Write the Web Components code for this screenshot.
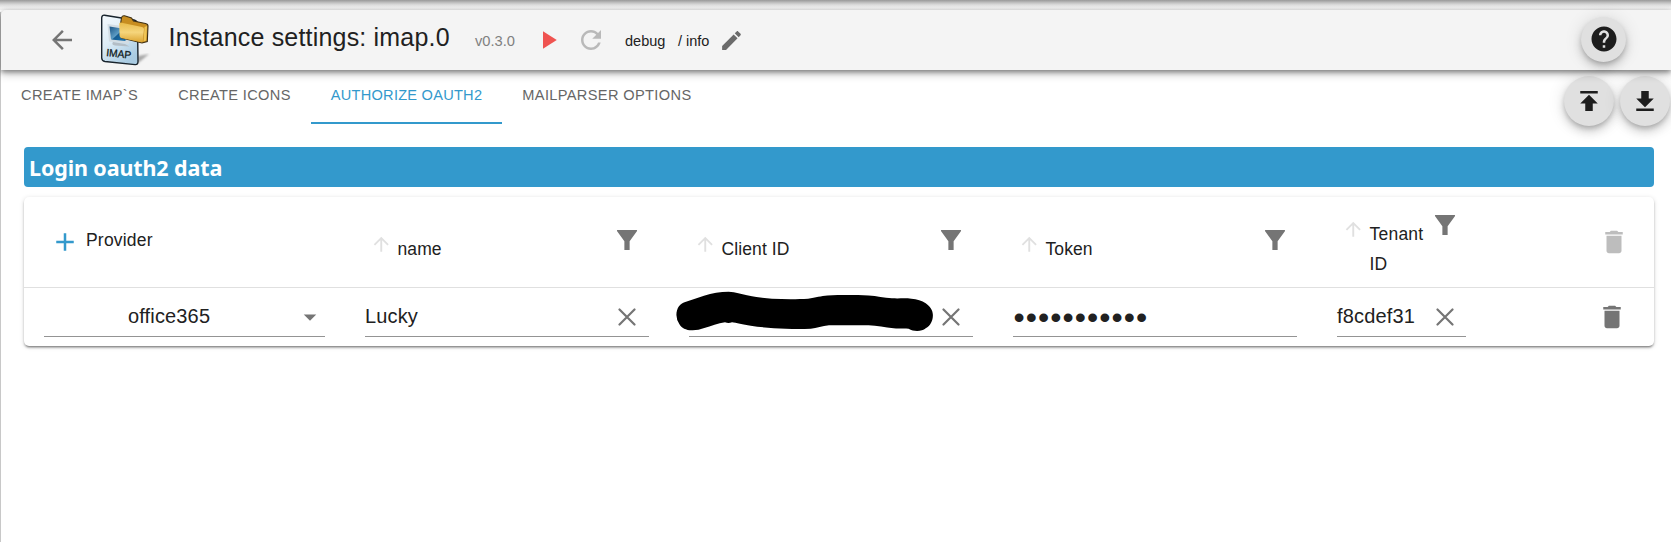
<!DOCTYPE html>
<html lang="en">
<head>
<meta charset="utf-8">
<title>Instance settings</title>
<style>
html,body{margin:0;height:100%;overflow:hidden;background:#fff}
body{font-family:"Liberation Sans",Arial,sans-serif;color:#212121}
</style>
</head>
<body>
<settings-page>
  <app-header slot="header" heading="Instance settings: imap.0" version="v0.3.0"></app-header>
  <tab-bar slot="tabs">
    <tab-item>CREATE IMAP`S</tab-item>
    <tab-item>CREATE ICONS</tab-item>
    <tab-item selected>AUTHORIZE OAUTH2</tab-item>
    <tab-item>MAILPARSER OPTIONS</tab-item>
  </tab-bar>
  <section-title>Login oauth2 data</section-title>
  <data-card>
    <head-cell kind="add">Provider</head-cell>
    <head-cell>name</head-cell>
    <head-cell>Client ID</head-cell>
    <head-cell>Token</head-cell>
    <head-cell kind="tall">Tenant<br>ID</head-cell>
    <trash-cell muted></trash-cell>
    <field-cell kind="select">office365</field-cell>
    <field-cell clear>Lucky</field-cell>
    <field-cell clear><redaction-mark></redaction-mark></field-cell>
    <field-cell kind="secret">•••••••••••</field-cell>
    <field-cell clear kind="narrow">f8cdef31</field-cell>
    <trash-cell></trash-cell>
  </data-card>
</settings-page>
<script>
const define = (name, html) => customElements.define(name, class extends HTMLElement {
  connectedCallback() {
    if (this.shadowRoot) return;
    const t = document.createElement('template');
    t.innerHTML = typeof html === 'function' ? html(this) : html;
    this.attachShadow({mode: 'open'}).append(t.content.cloneNode(true));
  }
});

const ICONS = {
  back: 'M20 11H7.83l5.59-5.59L12 4l-8 8 8 8 1.41-1.41L7.83 13H20v-2z',
  up: 'M4 12l1.41 1.41L11 7.83V20h2V7.83l5.58 5.59L20 12l-8-8-8 8z',
  play: 'M8 5v14l11-7z',
  refresh: 'M17.65 6.35C16.2 4.9 14.21 4 12 4c-4.42 0-7.99 3.58-7.99 8s3.57 8 7.99 8c3.73 0 6.84-2.55 7.73-6h-2.08c-.82 2.33-3.04 4-5.65 4-3.31 0-6-2.69-6-6s2.69-6 6-6c1.66 0 3.14.69 4.22 1.78L13 11h7V4l-2.35 2.35z',
  edit: 'M3 17.25V21h3.75L17.81 9.94l-3.75-3.75L3 17.25zM20.71 7.04c.39-.39.39-1.02 0-1.41l-2.34-2.34c-.39-.39-1.02-.39-1.41 0l-1.83 1.83 3.75 3.75 1.83-1.83z',
  help: 'M12 2C6.48 2 2 6.48 2 12s4.48 10 10 10 10-4.48 10-10S17.52 2 12 2zm1 17h-2v-2h2v2zm2.07-7.75l-.9.92C13.45 12.9 13 13.5 13 15h-2v-.5c0-1.1.45-2.1 1.17-2.83l1.24-1.26c.37-.36.59-.86.59-1.41 0-1.1-.9-2-2-2s-2 .9-2 2H8c0-2.21 1.79-4 4-4s4 1.79 4 4c0 .88-.36 1.68-.93 2.25z',
  publish: 'M5 4v2h14V4H5zm0 10h4v6h6v-6h4l-7-7-7 7z',
  download: 'M19 20v-2H5v2h14zm0-10h-4V4H9v6H5l7 7 7-7z',
  add: 'M19 13h-6v6h-2v-6H5v-2h6V5h2v6h6v2z',
  drop: 'M7 10l5 5 5-5z',
  trash: 'M6 19c0 1.1.9 2 2 2h8c1.1 0 2-.9 2-2V7H6v12zM19 4h-3.5l-1-1h-5l-1 1H5v2h14V4z',
  filter: 'M4.4 4h15.2c.5 0 .6.5.3.9L14.1 13v7H9.9v-7L4.1 4.9C3.8 4.5 3.9 4 4.4 4z'
};
define('md-icon', el => `
  <style>:host{display:block;flex:none;width:30px;height:30px}svg{display:block;width:100%;height:100%;fill:currentColor}</style>
  <svg viewBox="0 0 24 24"><path d="${ICONS[el.getAttribute('name')]}"/></svg>`);

define('round-button', el => `
  <style>:host{display:flex;flex:none;align-items:center;justify-content:center;width:50px;height:50px;border-radius:50%;background:#e0e0e0;color:#1d1d1d;box-shadow:0 3px 5px -1px rgba(0,0,0,.2),0 6px 10px rgba(0,0,0,.14),0 1px 18px rgba(0,0,0,.12)}
  :host([small]){width:45px;height:45px}</style>
  <md-icon name="${el.getAttribute('icon')}"></md-icon>`);

define('imap-logo', `
  <style>:host{display:block;flex:none;width:52px;height:54px}svg{display:block}text{font:10.5px "Liberation Sans",Arial,sans-serif}</style>
  <svg width="52" height="54" viewBox="0 0 52 54">
    <defs>
      <linearGradient id="p" x1="0" y1="0" x2=".6" y2="1"><stop offset="0" stop-color="#f6fafd"/><stop offset=".5" stop-color="#dcecf6"/><stop offset="1" stop-color="#a9cbe2"/></linearGradient>
      <linearGradient id="f" x1="0" y1="0" x2="0" y2="1"><stop offset="0" stop-color="#e8bb4a"/><stop offset=".5" stop-color="#f5d57c"/><stop offset="1" stop-color="#dca531"/></linearGradient>
      <linearGradient id="s" x1="0" y1="0" x2="1" y2="1"><stop offset="0" stop-color="#1c5586"/><stop offset=".5" stop-color="#5c9cc4"/><stop offset=".55" stop-color="#155c92"/><stop offset="1" stop-color="#1b75b0"/></linearGradient>
      <filter id="b"><feGaussianBlur stdDeviation="1.2"/></filter>
    </defs>
    <path d="M38 51L50 41L39 43z" fill="#777" opacity=".6" filter="url(#b)"/>
    <path d="M5.500 2.200L35 7Q38.500 8 38.500 11L39 48.500Q39 52 36 51.600L6 48.500Q2.800 48 2.700 45L2.700 5Q2.900 1.900 5.500 2.200z" fill="url(#p)" stroke="#18232c" stroke-width="1.400"/>
    <path d="M8.500 11L30 14V31L10 28.500z" fill="#d3dde4"/>
    <path d="M14 29L26 31L30.500 33.500L16 32.500Q12 31.500 14 29z" fill="#b4bec6"/>
    <path d="M10.500 13.500L26.500 16V28L12 26.500z" fill="url(#s)"/>
    <path d="M22.500 5Q23 2.300 25.500 2.800L32.500 5L34.500 8L46.500 10.500Q49 11 49 13L48.300 28.500L43 30L23 25L21.500 11z" fill="#c78d20" stroke="#3d2f14" stroke-width="1.100"/>
    <path d="M21.500 9.500L43 14Q45 14.500 45 16L43.800 28.500Q43 29.500 41 29L22 25Q20.500 24 20.500 22L20.300 11Q20.300 9.300 21.500 9.500z" fill="url(#f)"/>
    <path d="M45.500 14L48 13L47.200 27.500L44.500 28.500z" fill="#efc555"/>
    <text x="7" y="43" transform="rotate(6 7 43)" textLength="25" lengthAdjust="spacingAndGlyphs" fill="#101a20" stroke="#101a20" stroke-width=".3">IMAP</text>
  </svg>`);

define('app-header', el => `
  <style>
  :host{display:flex;align-items:center;height:60px;background:#f4f4f4;border-radius:5px 0 0 0;position:relative;box-shadow:0 2px 5px 0 rgba(0,0,0,.4),0 4px 10px rgba(0,0,0,.22)}
  .back{margin-left:46px;color:#757575}
  imap-logo{margin:0 17.500px 0 22px}
  h1{margin:0;width:306.500px;padding-bottom:7px;font:400 25px/30px "Liberation Sans",Arial,sans-serif;letter-spacing:.19px;white-space:nowrap}
  span{font-size:14.5px;line-height:20px;padding-top:2px;white-space:nowrap}
  .ver{width:58px;color:#808080;font-size:14.700px}
  .play{color:#ef5350}.refresh{margin-left:13px;color:#b9b9b9}
  .debug{margin-left:19px;width:53px}.info{width:41px}
  .edit{width:25px;height:25px;color:#6b6b6b}
  round-button{margin:-2px 45px 0 auto}
  </style>
  <md-icon class="back" name="back"></md-icon><imap-logo></imap-logo>
  <h1>${el.getAttribute('heading')}</h1><span class="ver">${el.getAttribute('version')}</span>
  <md-icon class="play" name="play"></md-icon><md-icon class="refresh" name="refresh"></md-icon>
  <span class="debug">debug</span><span class="info">/ info</span><md-icon class="edit" name="edit"></md-icon>
  <round-button small icon="help"></round-button>`);

define('tab-bar', `
  <style>:host{display:flex;height:54px}.tools{display:flex;gap:6px;margin:6px 1px 0 auto}</style>
  <slot></slot><div class="tools"><round-button icon="publish"></round-button><round-button icon="download"></round-button></div>`);

define('tab-item', `
  <style>:host{display:block;box-sizing:border-box;height:54px;padding:15px 20px 0;font-size:14.600px;line-height:20px;letter-spacing:.36px;color:#666;white-space:nowrap}
  :host([selected]){color:#3399cc;border-bottom:2px solid #3399cc;letter-spacing:.24px}</style><slot></slot>`);

define('section-title', `
  <style>:host{display:block;box-sizing:border-box;height:40px;margin:23px 17px 0 23px;padding-left:5px;border-radius:4px;background:#3399cc;color:#fff;font:bold 21.500px/41px "Noto Sans","Open Sans",sans-serif;letter-spacing:-.12px;white-space:nowrap}</style><slot></slot>`);

define('data-card', `
  <style>:host{display:grid;grid-template-columns:321px 324px 324px 324px 169px 168px;grid-template-rows:91px 58px;height:149px;margin:10px 17px 0 23px;border-radius:5px;background:#fff;box-shadow:0 3px 1px -2px rgba(0,0,0,.2),0 2px 2px rgba(0,0,0,.24),0 1px 5px rgba(0,0,0,.14)}</style><slot></slot>`);

define('head-cell', el => {
  const add = el.getAttribute('kind') === 'add';
  return `<style>
  :host{display:flex;align-items:flex-start;box-sizing:border-box;border-bottom:1px solid #e0e0e0;height:91px;padding:37px 27px 0 25px;font-size:17.500px;line-height:30px;letter-spacing:.1px}
  :host([kind=add]){padding:30px 0 0 26px;letter-spacing:.2px}
  :host([kind=tall]){padding:22px 26px 0 25px;letter-spacing:.22px}
  .sort{width:22.500px;height:22.500px;color:#e0e0e0;margin-top:-1px}
  .label{margin-left:5px;white-space:nowrap}
  .filter{margin:-9px 0 0 auto;color:#757575}
  .add{color:#3399cc}
  :host([kind=add]) .label{margin:-2px 0 0 6px}
  </style>` + (add
    ? '<md-icon class="add" name="add"></md-icon><div class="label"><slot></slot></div>'
    : '<md-icon class="sort" name="up"></md-icon><div class="label"><slot></slot></div><md-icon class="filter" name="filter"></md-icon>');
});

define('trash-cell', `
  <style>:host{display:flex;box-sizing:border-box;height:58px;padding:14px 0 0 111px;color:#757575}
  :host([muted]){height:91px;padding:30px 0 0 113px;color:#bdbdbd;border-bottom:1px solid #e0e0e0}</style>
  <md-icon name="trash"></md-icon>`);

define('field-cell', el => {
  const kind = el.getAttribute('kind');
  return `<style>
  :host{display:block;height:58px;padding:0 20px;font-size:20px;letter-spacing:.15px}
  .box{display:flex;align-items:center;box-sizing:border-box;height:49px;border-bottom:1px solid #949494}
  .value{flex:1;line-height:30px;padding-top:7px;white-space:nowrap}
  .clear{width:18px;height:18px;margin:9px 13px 0 0;fill:none;stroke:#757575;stroke-width:2.200;stroke-linecap:round}
  :host([kind=narrow]) .clear{margin-right:12px}
  .drop{margin-top:10px;color:#757575}
  :host([kind=select]) .value{padding-left:84px}
  :host([kind=secret]) .value{font-size:32px;letter-spacing:1.050px;padding:10px 0 0 .500px}
  ::slotted(redaction-mark){position:absolute}
  </style><div class="box"><div class="value"><slot></slot></div>` +
  (kind === 'select' ? '<md-icon class="drop" name="drop"></md-icon>' : '') +
  (el.hasAttribute('clear') ? '<svg class="clear" viewBox="0 0 18 18"><path d="M1.500 1.500L16.500 16.500M16.500 1.500L1.500 16.500"/></svg>' : '') + '</div>';
});

define('redaction-mark', `
  <style>:host{display:block;width:258px;height:42px;margin:-25px 0 0 -13px}svg{display:block}</style>
  <svg width="258" height="42" viewBox="676 291 258 42"><path d="M676.400 315C676.500 308 680 303 686 301.700C692 300 698 297.500 704 295.700Q716 291.700 728.600 291.700C736 292 741 294 747 295.300C758 297.500 764 298.300 772 298.700C784 299.300 798 299.300 808 298.700C816 297.800 821 295.800 827.500 295.500C842 294.900 855 295 868.600 295.500C877 296 884 298 892 298.300C899 298.700 905 298 911.400 298.700C917 299.200 922 300.600 925.700 303.300C930 306.500 932.900 310 932.900 315C932.900 321 930.500 325.500 925.700 328.300C922 331.500 914 332 908.600 328.700C904 328.200 898 328.800 893.600 328.300C885 327.500 877 325.700 868.600 325.300Q849 325 829 325.300C822 326 817 328 810.700 328.700C802 329.200 794 329.100 785.700 328.700C774 328.300 762 327.500 750.700 325.700C743 324.500 736 322.800 732 322.300Q728.500 323.500 725 322.300C718 323.500 711 326 704.300 328Q698 330.500 691.800 330.300C686 330.300 681.500 328 679.300 324Q676.500 320 676.400 315z"/></svg>`);

define('settings-page', `
  <style>
  :host{display:flex;flex-direction:column;box-sizing:border-box;height:542px;padding-left:1px;background:linear-gradient(#c8c8c8,#c8c8c8) 0 12px/1px 100% no-repeat,#fff}
  .edge{height:10px;margin-left:-1px;background:linear-gradient(#999 0,#bebebe 25%,#dedede 50%,#efefef 75%,#f3f3f3 100%)}
  </style>
  <div class="edge"></div><slot name="header"></slot><slot name="tabs"></slot><slot></slot>`);
</script>
</body>
</html>
